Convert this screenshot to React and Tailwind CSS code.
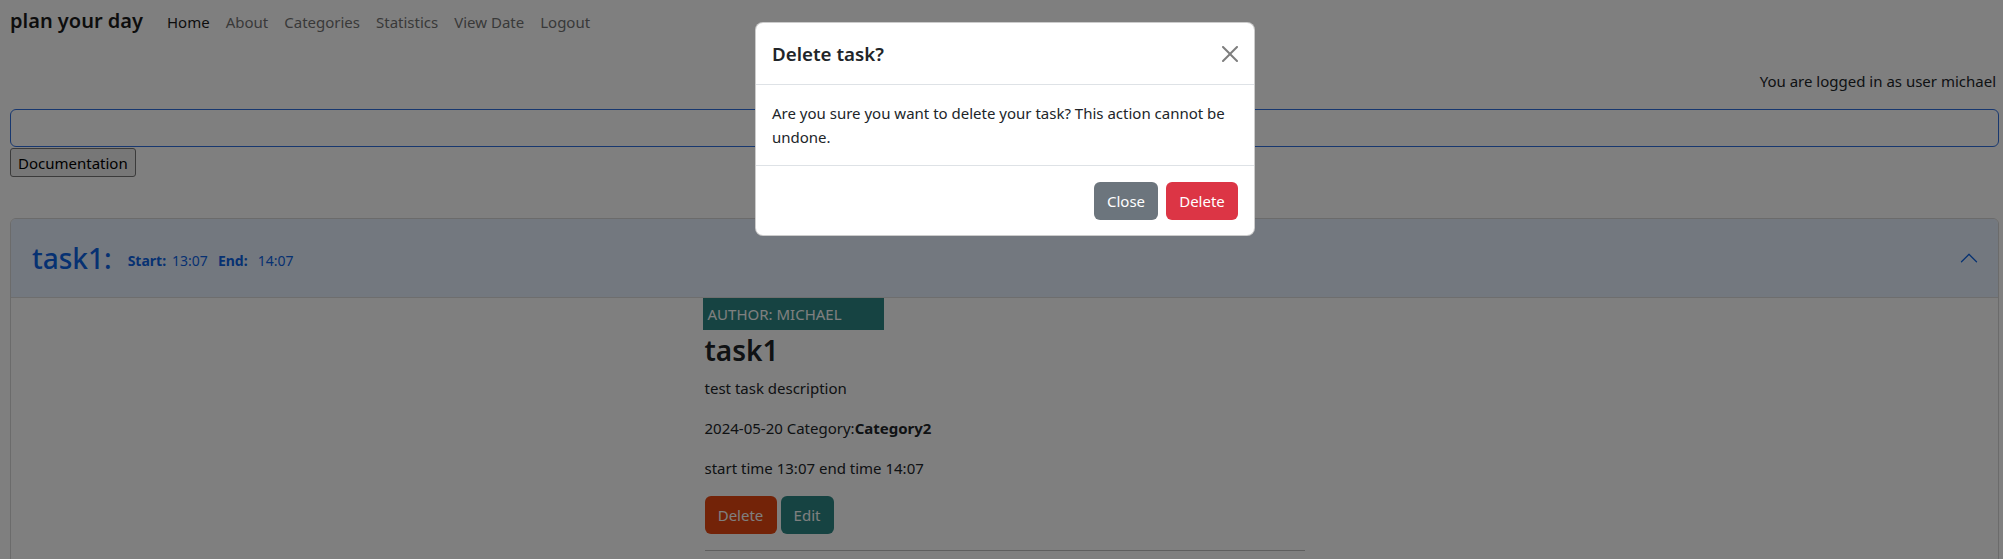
import React from "react";

const links = ["Home", "About", "Categories", "Statistics", "View Date", "Logout"];

function CloseIcon() {
  return (
    <svg width="16" height="16" viewBox="0 0 16 16" className="opacity-50">
      <path
        fill="#000"
        d="M.293.293a1 1 0 0 1 1.414 0L8 6.586 14.293.293a1 1 0 1 1 1.414 1.414L9.414 8l6.293 6.293a1 1 0 0 1-1.414 1.414L8 9.414l-6.293 6.293a1 1 0 0 1-1.414-1.414L6.586 8 .293 1.707a1 1 0 0 1 0-1.414z"
      />
    </svg>
  );
}

function ChevronUp() {
  return (
    <svg width="20" height="20" viewBox="0 0 16 16" className="rotate-180">
      <path
        fill="#0c63e4"
        fillRule="evenodd"
        d="M1.646 4.646a.5.5 0 0 1 .708 0L8 10.293l5.646-5.647a.5.5 0 0 1 .708.708l-6 6a.5.5 0 0 1-.708 0l-6-6a.5.5 0 0 1 0-.708z"
      />
    </svg>
  );
}

export default function App() {
  return (
    <div className="relative h-[559px] w-[2003px] overflow-hidden bg-white text-[#212529] font-['Noto_Sans',sans-serif]">
      {/* Page */}
      <nav className="flex items-baseline pl-[10px] pt-[6px]">
        <span className="mr-[16px] text-[20px] leading-[30px] font-semibold text-[#1a1a1a]">
          plan your day
        </span>
        {links.map((l, i) => (
          <span
            key={l}
            className={
              i === 0
                ? "px-[8px] text-[15px] leading-[24px] text-[#1a1a1a]"
                : "px-[8px] text-[15px] leading-[24px] text-[#737373]"
            }
          >
            {l}
          </span>
        ))}
      </nav>

      <div className="pl-[10px] pr-[4px]">
        <div className="mt-[33px] pr-[3px] text-right text-[15px] leading-[24px]">
          You are logged in as user michael
        </div>
        <input
          type="text"
          readOnly
          className="mt-[16px] block h-[38px] w-full rounded-[6px] border border-[#2f6fdf] bg-white px-[12px] outline-none"
        />
        <button className="mt-[1px] block h-[29px] rounded-[3px] border border-[#767676] bg-[#efefef] px-[7px] text-[15px] leading-[24px] text-black">
          Documentation
        </button>

        <div className="mt-[41px] h-[400px] rounded-t-[6px] border border-[#d6d6d6] bg-white">
          <div className="flex h-[79px] items-center rounded-t-[5px] border-b border-[#dcdcdc] bg-[#e7f1ff] pl-[21px] pr-[19px] text-[#0c63e4]">
            <span className="text-[28px] leading-[34px] font-medium">task1:</span>
            <span className="ml-[16px] flex pt-[4px] text-[14px] leading-[21px]">
              <b className="font-bold">Start:</b>
              <span className="ml-[6px]">13:07</span>
              <b className="ml-[10px] font-bold">End:</b>
              <span className="ml-[10px]">14:07</span>
            </span>
            <span className="ml-auto flex">
              <ChevronUp />
            </span>
          </div>

          <div className="mx-auto w-[600px]">
            <div className="-ml-[2px] flex h-[32px] w-[181px] items-center bg-[#2c8784] pl-[5px] text-[15px] text-white">
              AUTHOR: MICHAEL
            </div>
            <h2 className="mt-[1px] mb-[7px] text-[28px] leading-[38px] font-semibold">task1</h2>
            <p className="mb-[16px] text-[15px] leading-[24px]">test task description</p>
            <p className="mb-[16px] text-[15px] leading-[24px]">
              2024-05-20 Category:<b className="font-bold">Category2</b>
            </p>
            <p className="mb-[16px] text-[15px] leading-[24px]">start time 13:07 end time 14:07</p>
            <div className="flex gap-[4px]">
              <button className="h-[38px] w-[72px] rounded-[6px] bg-[#e64610] text-[15px] text-white">
                Delete
              </button>
              <button className="h-[38px] w-[53px] rounded-[6px] bg-[#2c8784] text-[15px] text-white">
                Edit
              </button>
            </div>
            <hr className="mt-[16px] border-t border-[#bfbfbf]" />
          </div>
        </div>
      </div>

      {/* Backdrop */}
      <div className="absolute inset-0 z-10 bg-black/50" />

      {/* Modal */}
      <div className="absolute left-[755px] top-[22px] z-20 w-[500px] rounded-[8px] border border-black/20 bg-white">
        <div className="flex h-[62px] items-center justify-between border-b border-[#dee2e6] px-[16px]">
          <h5 className="text-[18.75px] leading-[30px] font-semibold">Delete task?</h5>
          <CloseIcon />
        </div>
        <div className="p-[16px] text-[15px] leading-[24px]">
          <span className="whitespace-nowrap">
            Are you sure you want to delete your task? This action cannot be
          </span>
          <br />
          undone.
        </div>
        <div className="flex justify-end gap-[8px] border-t border-[#dee2e6] px-[16px] pt-[16px] pb-[15px]">
          <button className="h-[38px] w-[64px] rounded-[6px] bg-[#6c757d] text-[15px] text-white">
            Close
          </button>
          <button className="h-[38px] w-[72px] rounded-[6px] bg-[#dc3545] text-[15px] text-white">
            Delete
          </button>
        </div>
      </div>
    </div>
  );
}
